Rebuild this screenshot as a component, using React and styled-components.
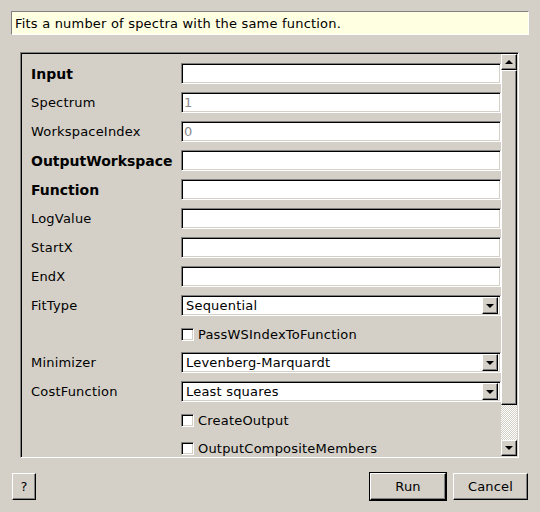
import React from 'react'
import styled, { createGlobalStyle, css } from 'styled-components'

const GlobalStyle = createGlobalStyle`
  html, body {
    margin: 0;
    background: #d4d0c8;
  }
  body {
    font-family: "DejaVu Sans", "Liberation Sans", sans-serif;
    font-size: 13px;
    letter-spacing: 0.2px;
    color: #000;
  }
`

const sunken = css`
  border: 1px solid;
  border-color: #808080 #fff #fff #808080;
  box-shadow: inset 1px 1px #000, inset -1px -1px #d4d0c8;
`

const raised = css`
  border: 1px solid;
  border-color: #fff #000 #000 #fff;
  box-shadow: inset -1px -1px #808080;
  background: #d4d0c8;
`

const Page = styled.div`
  width: 540px;
  height: 512px;
  box-sizing: border-box;
  padding: 11px 11px 0;
  display: flex;
  flex-direction: column;
`

const Description = styled.div`
  height: 24px;
  box-sizing: border-box;
  border: 1px solid;
  border-color: #808080 #fff #fff #808080;
  background: #ffffe1;
  padding: 1px 3px 0;
  display: flex;
  align-items: center;
`

const Frame = styled.div`
  margin: 17px 10px 0 9px;
  height: 406px;
  box-sizing: border-box;
  display: flex;
  ${sunken};
  padding: 1px;
`

const Viewport = styled.div`
  flex: 1;
  overflow: hidden;
  padding: 9px 0 0 9px;
  display: flex;
  flex-direction: column;
  gap: 8px;
`

const Row = styled.div`
  display: grid;
  grid-template-columns: 150px 1fr;
  align-items: center;
  flex: none;
  height: ${p => (p.$check ? 20 : 21)}px;
`

const Label = styled.span`
  white-space: nowrap;
  ${p => p.$bold && css`
    font-weight: bold;
    font-size: 14px;
    letter-spacing: 0;
  `}
`

const TextField = styled.div`
  height: 21px;
  box-sizing: border-box;
  ${sunken};
  background: #fff;
  padding: 0 2px;
  display: flex;
  align-items: center;
  color: ${p => (p.$disabled ? '#8a8a8a' : '#000')};
`

const Combo = styled(TextField)`
  padding: 0 2px 0 4px;
  justify-content: space-between;
`

const DropButton = styled.span`
  width: 16px;
  height: 17px;
  box-sizing: border-box;
  ${raised};
  display: flex;
  align-items: center;
  justify-content: center;
`

const Arrow = styled.span`
  width: 0;
  height: 0;
  border-left: 4px solid transparent;
  border-right: 4px solid transparent;
  ${p => (p.$up ? 'border-bottom' : 'border-top')}: 4px solid #000;
`

const CheckCell = styled.label`
  grid-column: 2;
  display: flex;
  align-items: center;
  gap: 4px;
`

const Checkbox = styled.span`
  width: 13px;
  height: 13px;
  box-sizing: border-box;
  ${sunken};
  background: #fff;
`

const ScrollBar = styled.div`
  width: 16px;
  display: flex;
  flex-direction: column;
`

const ScrollButton = styled.div`
  height: 16px;
  box-sizing: border-box;
  ${raised};
  display: flex;
  align-items: center;
  justify-content: center;
`

const Thumb = styled.div`
  height: 335px;
  box-sizing: border-box;
  ${raised};
`

const Track = styled.div`
  flex: 1;
  background-color: #fff;
  background-image: conic-gradient(#d4d0c8 25%, #fff 0 50%, #d4d0c8 0 75%, #fff 0);
  background-size: 2px 2px;
`

const Footer = styled.div`
  margin-top: 15px;
  padding: 0 1px;
  display: flex;
  align-items: center;
  gap: 7px;
`

const Button = styled.button`
  font: inherit;
  letter-spacing: inherit;
  color: #000;
  height: 27px;
  width: ${p => p.$width}px;
  box-sizing: border-box;
  ${raised};
  padding: 0;
  ${p => p.$default && css`
    outline: 1px solid #000;
  `}
  &:first-child {
    margin-right: auto;
  }
`

const fields = [
  { label: 'Input', bold: true },
  { label: 'Spectrum', value: '1', disabled: true },
  { label: 'WorkspaceIndex', value: '0', disabled: true },
  { label: 'OutputWorkspace', bold: true },
  { label: 'Function', bold: true },
  { label: 'LogValue' },
  { label: 'StartX' },
  { label: 'EndX' },
  { label: 'FitType', combo: 'Sequential' },
  { check: 'PassWSIndexToFunction' },
  { label: 'Minimizer', combo: 'Levenberg-Marquardt' },
  { label: 'CostFunction', combo: 'Least squares' },
  { check: 'CreateOutput' },
  { check: 'OutputCompositeMembers' },
]

export default function App() {
  return (
    <Page>
      <GlobalStyle />
      <Description>Fits a number of spectra with the same function.</Description>
      <Frame>
        <Viewport>
          {fields.map((f, i) =>
            f.check ? (
              <Row key={i} $check>
                <CheckCell>
                  <Checkbox />
                  {f.check}
                </CheckCell>
              </Row>
            ) : (
              <Row key={i}>
                <Label $bold={f.bold}>{f.label}</Label>
                {f.combo ? (
                  <Combo>
                    {f.combo}
                    <DropButton><Arrow /></DropButton>
                  </Combo>
                ) : (
                  <TextField $disabled={f.disabled}>{f.value}</TextField>
                )}
              </Row>
            )
          )}
        </Viewport>
        <ScrollBar>
          <ScrollButton><Arrow $up /></ScrollButton>
          <Thumb />
          <Track />
          <ScrollButton><Arrow /></ScrollButton>
        </ScrollBar>
      </Frame>
      <Footer>
        <Button $width={24}>?</Button>
        <Button $width={76} $default>Run</Button>
        <Button $width={75}>Cancel</Button>
      </Footer>
    </Page>
  )
}
